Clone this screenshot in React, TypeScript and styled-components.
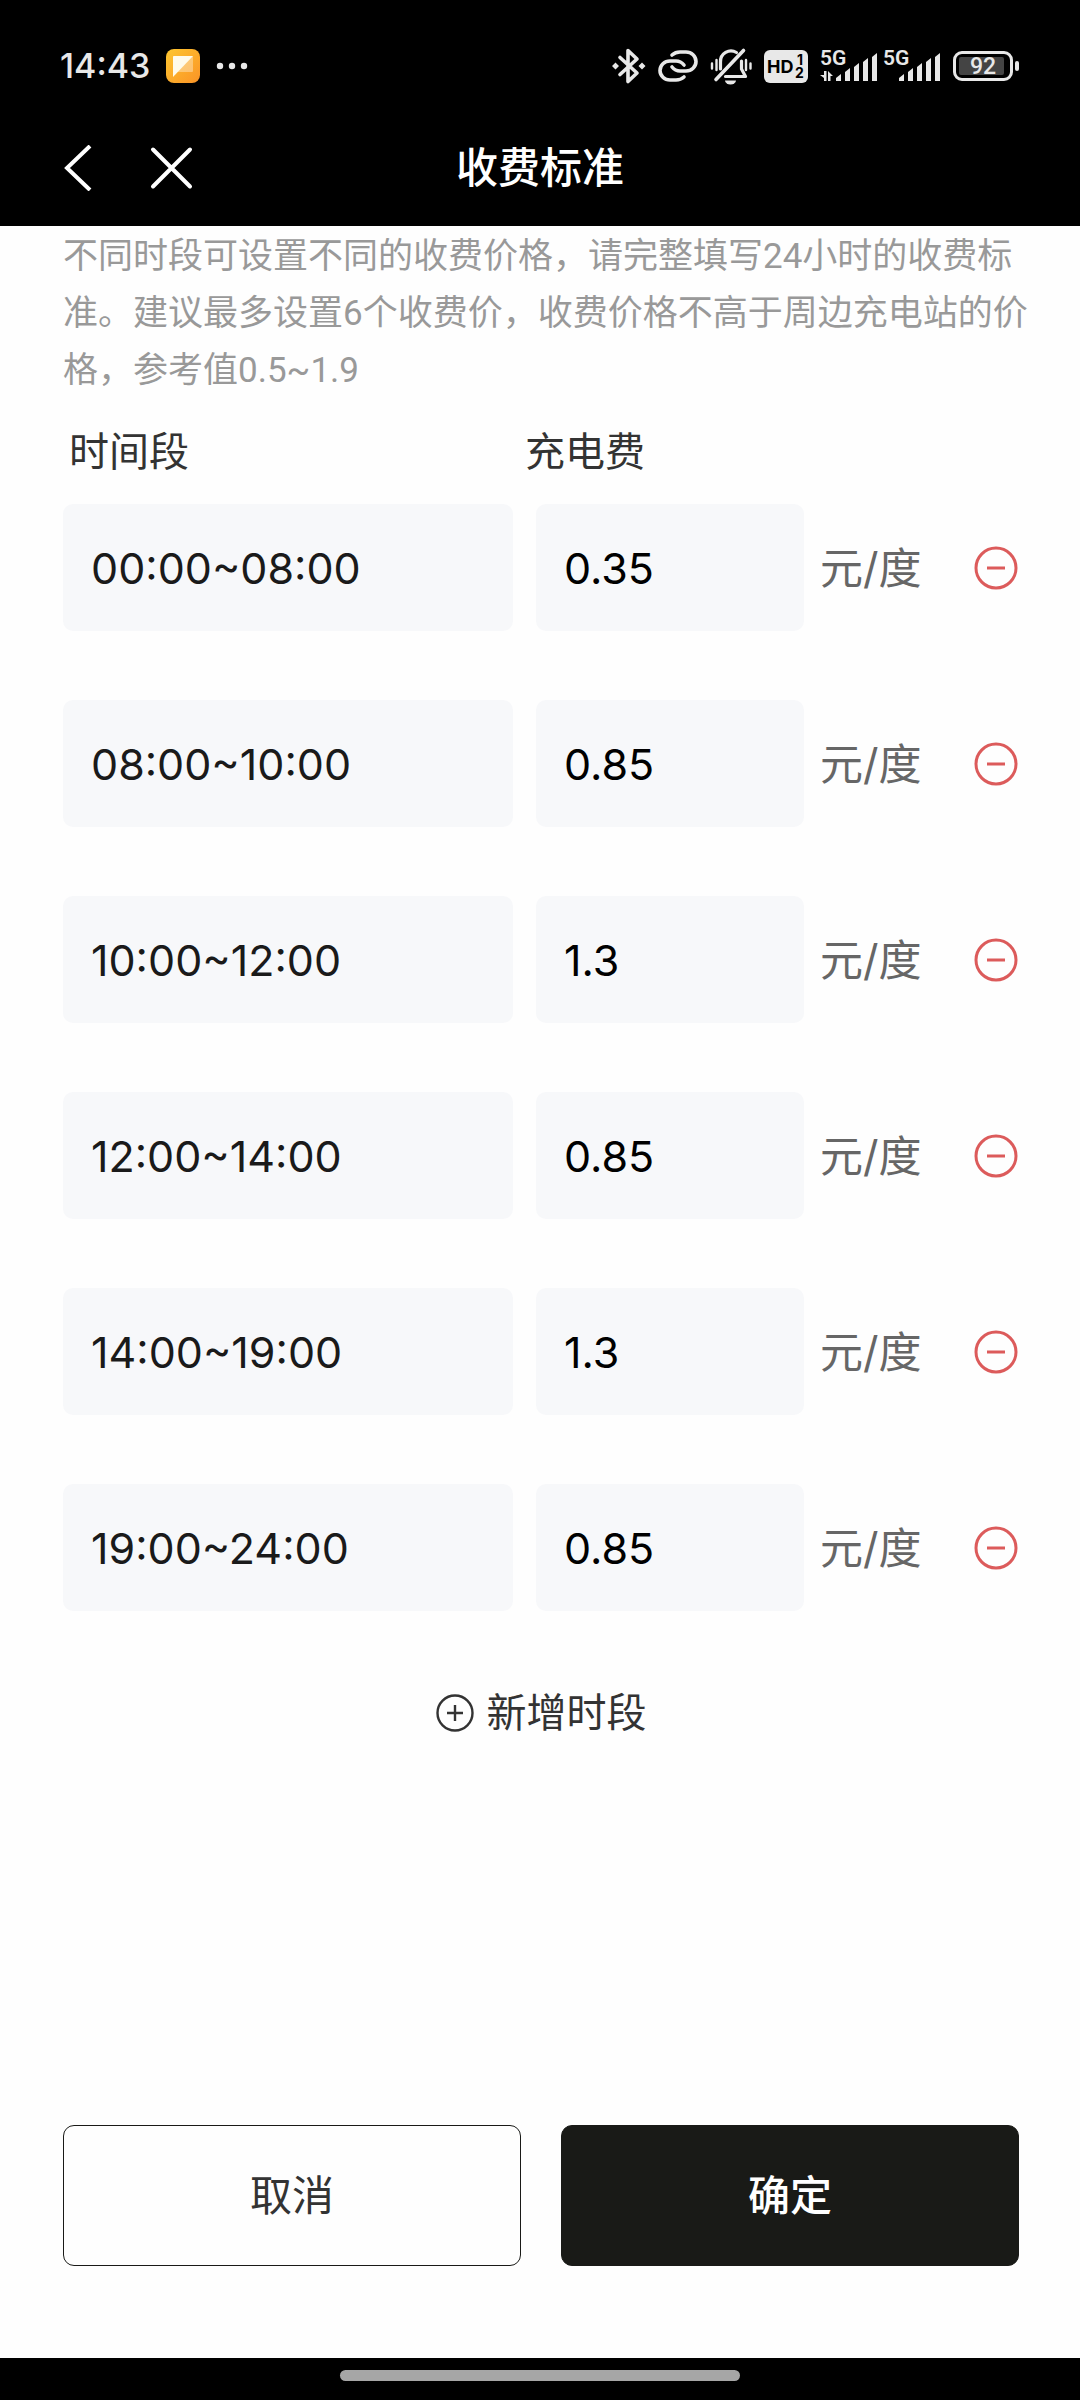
import React, { useState } from "react";
import styled, { createGlobalStyle } from "styled-components";

const FONT = `Inter, "Noto Sans CJK SC", sans-serif`;
const PALE = "#e8e8e8";

const GlobalStyle = createGlobalStyle`
  *, *::before, *::after { box-sizing: border-box; }
  body { margin: 0; background: #fefefe; font-family: ${FONT}; }
  button, input { font-family: inherit; }
`;

const Screen = styled.div`
  min-height: 100vh;
  display: flex;
  flex-direction: column;
  background: #fefefe;
`;

const StatusBar = styled.div`
  display: flex;
  justify-content: space-between;
  align-items: center;
  height: 110px;
  padding: 22px 61px 0 60px;
  background: #000;
  color: ${PALE};
`;

const StatusGroup = styled.div<{ $gap: number }>`
  display: flex;
  align-items: center;
  gap: ${(p) => p.$gap}px;
  svg { display: block; flex: none; }
`;

const Clock = styled.time`
  font-size: 34px;
  line-height: 44px;
  font-weight: 500;
`;

const NavBar = styled.header`
  display: grid;
  grid-template-columns: 1fr auto 1fr;
  align-items: center;
  height: 116px;
  padding: 0 60px;
  background: #000;
  color: #fff;
`;

const NavActions = styled.div`
  display: flex;
  gap: 52px;
`;

const IconButton = styled.button`
  display: flex;
  padding: 0;
  border: 0;
  background: none;
  color: inherit;
  cursor: pointer;
  svg { display: block; }
`;

const Title = styled.h1`
  margin: 0;
  font-size: 42px;
  line-height: 60px;
  font-weight: 500;
`;

const Content = styled.main`
  flex: 1;
  padding: 2px 62px 0 63px;
`;

const Hint = styled.p`
  margin: 0 -22px 0 0;
  font-family: Roboto, "Noto Sans CJK SC", sans-serif;
  font-size: 35px;
  line-height: 57px;
  color: #999;
`;

const columns = `
  display: grid;
  grid-template-columns: 450fr 268fr 191fr;
  column-gap: 23px;
`;

const Headings = styled.div`
  ${columns}
  margin-top: 23px;
  font-size: 40px;
  line-height: 60px;
  color: #333;
`;

const Heading = styled.span<{ $indent?: boolean }>`
  margin-left: ${(p) => (p.$indent ? 6 : -11)}px;
`;

const Periods = styled.ul`
  display: grid;
  row-gap: 69px;
  margin: 22px 0 0;
  padding: 0;
  list-style: none;
`;

const Period = styled.li`
  ${columns}
  align-items: center;
`;

const Field = styled.input<{ $tone: string }>`
  width: 100%;
  height: 127px;
  padding: 0 28px;
  border: 0;
  border-radius: 10px;
  outline: 0;
  background: #f7f8fa;
  color: ${(p) => p.$tone};
  font-size: 43px;
`;

const PeriodEnd = styled.div`
  display: flex;
  justify-content: space-between;
  align-items: center;
  margin-left: -7px;
`;

const Unit = styled.span`
  font-size: 43px;
  line-height: 60px;
  color: #666;
`;

const RemoveButton = styled(IconButton)`
  color: #dc5b5b;
`;

const AddButton = styled(IconButton)`
  align-items: center;
  gap: 12px;
  margin: 72px auto 0;
  font-size: 40px;
  line-height: 60px;
  color: #333;
`;

const Footer = styled.footer`
  display: grid;
  grid-template-columns: 1fr 1fr;
  gap: 40px;
  padding: 0 61px 92px 63px;
`;

const FooterButton = styled.button<{ $primary?: boolean }>`
  height: 141px;
  padding: 0;
  border: 1px solid #191a17;
  border-radius: 11px;
  background: ${(p) => (p.$primary ? "#191a17" : "transparent")};
  color: ${(p) => (p.$primary ? "#fff" : "#333")};
  font-size: 42px;
  line-height: 60px;
  font-weight: ${(p) => (p.$primary ? 500 : 400)};
  cursor: pointer;
`;

const GestureArea = styled.div`
  display: flex;
  justify-content: center;
  height: 42px;
  padding-top: 12px;
  background: #000;
`;

const GestureHandle = styled.div`
  width: 37%;
  height: 11px;
  border-radius: 6px;
  background: #a6a6a6;
`;

const NoteAppIcon = () => (
  <svg width="34" height="34" viewBox="0 0 34 34" aria-hidden="true">
    <defs>
      <linearGradient id="note" x1="0" y1="0" x2="1" y2="1">
        <stop offset="0" stopColor="#fdc62f" />
        <stop offset="1" stopColor="#fb9326" />
      </linearGradient>
    </defs>
    <rect width="34" height="34" rx="8" fill="url(#note)" />
    <rect x="7" y="7" width="20" height="16" rx="1" fill="#fff" opacity=".35" />
    <path d="M8 7h19L7 28V8q0-1 1-1z" fill="#fffbea" />
  </svg>
);

const MoreDots = () => (
  <svg width="32" height="8" viewBox="0 0 32 8" fill={PALE} aria-hidden="true">
    <circle cx="4" cy="4" r="3.200" />
    <circle cx="16" cy="4" r="3.200" />
    <circle cx="28" cy="4" r="3.200" />
  </svg>
);

const BluetoothIcon = () => (
  <svg width="34" height="38" viewBox="0 0 34 38" fill="none" stroke={PALE} strokeWidth="3.600" strokeLinejoin="round" strokeLinecap="round" aria-hidden="true">
    <path d="M8 10.500L25 26 16 34.500V3.500L25 12 8 27.500" />
    <g fill={PALE} stroke="none">
      <path d="M3.500 15.500l3.500 3.500-3.500 3.500L0 19zM30 15.500l3.500 3.500-3.500 3.500-3.500-3.500z" />
    </g>
  </svg>
);

const LinkIcon = () => (
  <svg width="40" height="32" viewBox="0 0 40 32" fill="none" stroke={PALE} strokeWidth="3.600" strokeLinecap="round" aria-hidden="true">
    <path d="M14 5C16.500 2.800 19 2 22 2h6a10 9.500 0 0 1 0 19h-6c-3.500 0-6-1.500-8-4" />
    <path d="M26 27c-2.500 2.200-5 3-8 3h-6a10 9.500 0 0 1 0-19h6c3.500 0 6 1.500 8 4" />
  </svg>
);

const MutedBellIcon = () => (
  <svg width="42" height="38" viewBox="0 0 42 38" fill="none" stroke={PALE} strokeWidth="3.200" strokeLinecap="round" strokeLinejoin="round" aria-hidden="true">
    <path d="M10.500 22V15a10.500 10.500 0 0 1 16-9.500M31.500 14v8l4 7.500H15.500" />
    <path d="M6 32.500L33.500 3.500" strokeWidth="3.600" />
    <path d="M2 16.500v5M6.500 13v10M36 13v10M40.500 16.500v5" strokeWidth="2.400" />
    <path d="M15 33.500h11a5.500 4 0 0 1-11 0z" fill={PALE} stroke="none" />
  </svg>
);

const HdIcon = () => (
  <svg width="44" height="33" viewBox="0 0 44 33" fontFamily="Inter, sans-serif" fontWeight="700" aria-hidden="true">
    <rect width="44" height="33" rx="6" fill={PALE} />
    <text x="3" y="23" fontSize="18">HD</text>
    <text x="33" y="15" fontSize="14">1</text>
    <text x="31" y="28" fontSize="14">2</text>
  </svg>
);

const SignalIcon = ({ active }: { active?: boolean }) => (
  <svg width="58" height="50" viewBox="0 -8 58 50" fill={PALE} aria-hidden="true">
    <text x="0" y="16" fontSize="21" fontWeight="600" fontFamily="Roboto, sans-serif">5G</text>
    {active && <path d="M4 22h2.500v10H4v-3L0 26h4zM8 22l5 5h-2.500v5H8z" />}
    <path d="M16 32v-3l5-4v7zM25 32V23l5-4v13zM34 32V18l5-4v18zM43 32V13l5-4v23zM52 32V8l5-4v28z" />
  </svg>
);

const BatteryIcon = () => (
  <svg width="66" height="30" viewBox="0 0 66 30" aria-hidden="true">
    <rect x="1.500" y="1.500" width="57" height="27" rx="7.500" fill="none" stroke={PALE} strokeWidth="3" />
    <rect x="6" y="6" width="45" height="18" rx="2" fill="#444" />
    <rect x="62" y="10" width="4" height="10" rx="2" fill={PALE} />
    <text x="30" y="23" fontSize="23" fontWeight="500" textAnchor="middle" fill={PALE} fontFamily="Roboto, sans-serif">92</text>
  </svg>
);

const BackIcon = () => (
  <svg width="36" height="46" viewBox="0 0 36 46" fill="none" stroke="#fff" strokeWidth="4" aria-hidden="true">
    <path d="M30 1L7 23l23 22" />
  </svg>
);

const CloseIcon = () => (
  <svg width="46" height="46" viewBox="0 0 46 46" fill="none" stroke="#fff" strokeWidth="4" strokeLinecap="round" aria-hidden="true">
    <path d="M5 4.500l37 37M42 4.500l-37 37" />
  </svg>
);

const MinusIcon = () => (
  <svg width="44" height="44" viewBox="0 0 44 44" fill="none" stroke="currentColor" strokeWidth="3" aria-hidden="true">
    <circle cx="22" cy="22" r="20" />
    <path d="M13 22h18" />
  </svg>
);

const PlusIcon = () => (
  <svg width="40" height="40" viewBox="0 0 40 40" fill="none" stroke="currentColor" strokeWidth="2.400" aria-hidden="true">
    <circle cx="20" cy="20" r="17.500" />
    <path d="M12 20h16M20 12v16" />
  </svg>
);

const initialPeriods = [
  { id: 1, time: "00:00~08:00", price: "0.35" },
  { id: 2, time: "08:00~10:00", price: "0.85" },
  { id: 3, time: "10:00~12:00", price: "1.3" },
  { id: 4, time: "12:00~14:00", price: "0.85" },
  { id: 5, time: "14:00~19:00", price: "1.3" },
  { id: 6, time: "19:00~24:00", price: "0.85" },
];

export default function App() {
  const [periods, setPeriods] = useState(initialPeriods);

  const setPrice = (id: number, price: string) =>
    setPeriods((list) => list.map((p) => (p.id === id ? { ...p, price } : p)));
  const remove = (id: number) => setPeriods((list) => list.filter((p) => p.id !== id));
  const add = () => setPeriods((list) => [...list, { id: Date.now(), time: "", price: "" }]);

  return (
    <Screen>
      <GlobalStyle />
      <StatusBar>
        <StatusGroup $gap={16}>
          <Clock>14:43</Clock>
          <NoteAppIcon />
          <MoreDots />
        </StatusGroup>
        <StatusGroup $gap={12}>
          <BluetoothIcon />
          <LinkIcon />
          <MutedBellIcon />
          <HdIcon />
          <StatusGroup $gap={5}>
            <SignalIcon active />
            <SignalIcon />
          </StatusGroup>
          <BatteryIcon />
        </StatusGroup>
      </StatusBar>
      <NavBar>
        <NavActions>
          <IconButton type="button" aria-label="返回"><BackIcon /></IconButton>
          <IconButton type="button" aria-label="关闭"><CloseIcon /></IconButton>
        </NavActions>
        <Title>收费标准</Title>
      </NavBar>
      <Content>
        <Hint>
          不同时段可设置不同的收费价格，请完整填写24小时的收费标准。建议最多设置6个收费价，收费价格不高于周边充电站的价格，参考值0.5~1.9
        </Hint>
        <Headings>
          <Heading $indent id="col-time">时间段</Heading>
          <Heading id="col-price">充电费</Heading>
        </Headings>
        <Periods>
          {periods.map((p) => (
            <Period key={p.id}>
              <Field $tone="#1a1a1a" aria-labelledby="col-time" value={p.time} readOnly />
              <Field
                $tone="#000"
                aria-labelledby="col-price"
                inputMode="decimal"
                value={p.price}
                onChange={(e) => setPrice(p.id, e.target.value)}
              />
              <PeriodEnd>
                <Unit>元/度</Unit>
                <RemoveButton type="button" aria-label="删除" onClick={() => remove(p.id)}>
                  <MinusIcon />
                </RemoveButton>
              </PeriodEnd>
            </Period>
          ))}
        </Periods>
        <AddButton type="button" onClick={add}>
          <PlusIcon />
          新增时段
        </AddButton>
      </Content>
      <Footer>
        <FooterButton type="button">取消</FooterButton>
        <FooterButton type="button" $primary>确定</FooterButton>
      </Footer>
      <GestureArea>
        <GestureHandle />
      </GestureArea>
    </Screen>
  );
}
